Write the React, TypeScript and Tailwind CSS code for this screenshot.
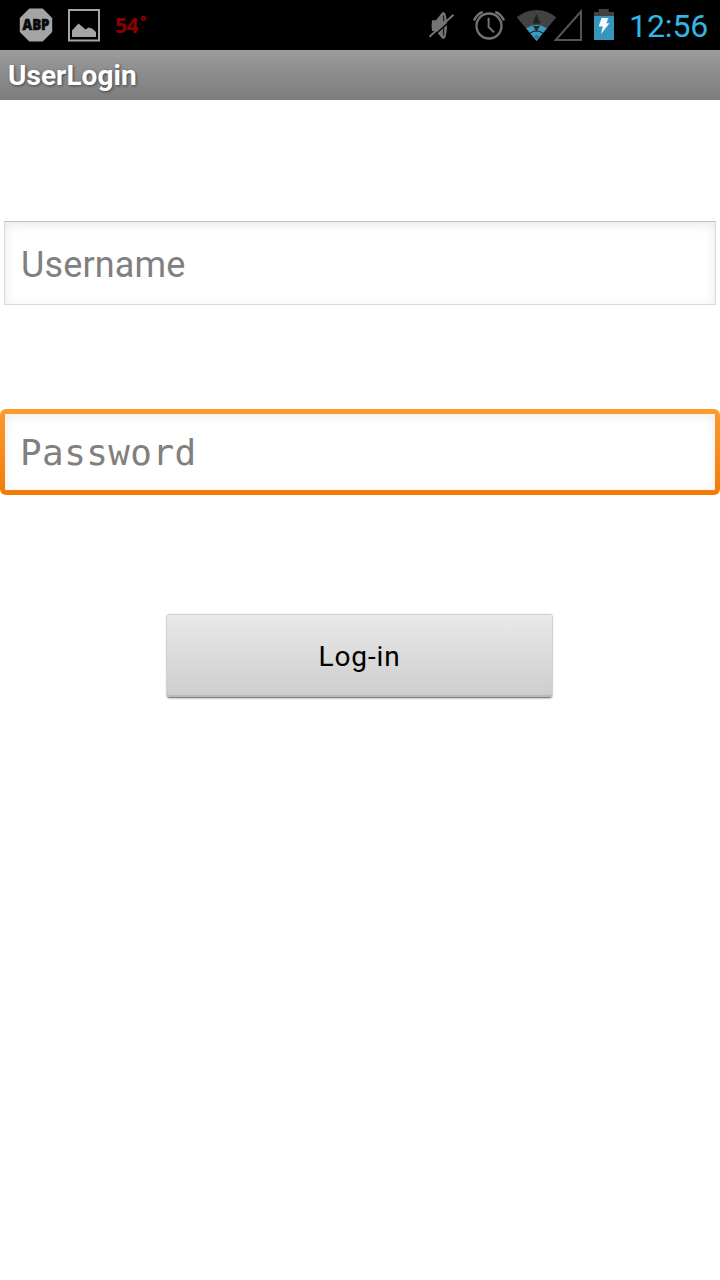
import React from "react";

function AdblockIcon() {
  return (
    <svg className="ml-[19px] block" width="34" height="34" viewBox="0 0 34 34">
      <path d="M10.3 0.4H23.7L33.2 9.9V24.1L23.7 33.6H10.3L0.8 24.1V9.9Z" fill="#a5a5a5" />
      <text x="17" y="22.2" textAnchor="middle" textLength="27" lengthAdjust="spacingAndGlyphs" fontFamily="Open Sans, sans-serif" fontWeight="800" fontSize="15.5" fill="#0a0a0a" stroke="#0a0a0a" strokeWidth="0.6">ABP</text>
    </svg>
  );
}

function PictureIcon() {
  return (
    <svg className="ml-[15px] block" width="32" height="34" viewBox="0 0 32 34">
      <rect x="1" y="2" width="30" height="30.5" fill="none" stroke="#a5a5a5" strokeWidth="2" />
      <path d="M4 29V22.5L10.5 15.5L17.5 21.5L20.5 19.5L24 20.5L28 24V29Z" fill="#a5a5a5" />
    </svg>
  );
}

function MuteIcon() {
  return (
    <svg className="block" width="28" height="32" viewBox="428 9 28 32">
      <path d="M432 20.3H436L441.5 13.2Q443.8 10.5 445.5 14Q446.9 18 446.9 25.5Q446.9 33 445.5 37Q443.8 40.5 441.5 37.8L436 31H432Q431.2 25.5 432 20.3Z" fill="#737373" />
      <path d="M443.6 15.5V21M443.6 27.5V35.5" stroke="#1c1c1c" strokeWidth="1.3" fill="none" />
      <path d="M431.5 37.8L455 16.8" stroke="#000" strokeWidth="1.5" />
      <path d="M429.5 36.8L453.5 14.8" stroke="#737373" strokeWidth="2" />
    </svg>
  );
}

function AlarmIcon() {
  return (
    <svg className="ml-[16px] block" width="34" height="32" viewBox="472 9 34 32">
      <g fill="none" stroke="#737373">
        <circle cx="489" cy="26" r="12.5" strokeWidth="2.3" />
        <path d="M488.6 17.8V27L494 32.3" strokeWidth="2" />
        <path d="M474 20.5Q476.5 14.5 482.7 11.9M495.3 11.9Q501.5 14.5 504 20.5" strokeWidth="2.3" />
      </g>
    </svg>
  );
}

function SignalIcons() {
  return (
    <svg className="ml-[10px] block" width="67" height="34" viewBox="516 8 67 34">
      <path d="M516.7 17.2Q526 10 536.5 10T556.3 17.2L536.5 41Z" fill="#424242" />
      <path d="M526.1 28.2Q536.5 21.8 546.9 28.2L536.5 41Z" fill="#3b9bc3" />
      <path d="M529.8 33.3Q536.5 28.5 543.2 33.3" fill="none" stroke="#20262a" strokeWidth="1.1" />
      <path d="M536.5 14L540.5 23.5H532.5Z" fill="#202020" />
      <path d="M533 26H540L536.5 32Z" fill="#242c30" />
      <path d="M534 37L536.5 34.5L539 37L536.5 39Z" fill="#2c7494" />
      <path d="M581 11.5V40H555.7Z" fill="none" stroke="#555" strokeWidth="2" />
    </svg>
  );
}

function BatteryIcon() {
  return (
    <svg className="ml-[11px] block" width="20" height="32" viewBox="594 9 20 32">
      <path d="M598.7 9H608.7V12H614V16H594V12H598.7Z" fill="#424242" />
      <path d="M594 16H614V40H594Z" fill="#3896bd" />
      <path d="M601.5 18H608.5L606.3 23.2H609.5L601 34L602.8 26.4H598.7Z" fill="#f4fafc" />
    </svg>
  );
}

export default function App() {
  return (
    <main className="flex min-h-[1280px] w-full flex-col bg-white font-[Roboto,sans-serif]">
      <div className="flex h-[50px] items-center bg-black">
        <AdblockIcon />
        <PictureIcon />
        <div className="ml-[15px] flex items-start font-['Open_Sans',sans-serif] font-bold text-[#8e0000]">
          <span className="text-[21px] leading-[52px] tracking-[-0.6px]">54</span>
          <span className="ml-[2px] mt-[11px] text-[16px] leading-[22px]">°</span>
        </div>
        <div className="ml-auto flex items-center pr-[12px]">
          <MuteIcon />
          <AlarmIcon />
          <SignalIcons />
          <BatteryIcon />
          <span className="ml-[15px] w-[79px] whitespace-nowrap pt-[2px] text-[32px] leading-[50px] tracking-[-0.1px] text-[#33b5e5]">12:56</span>
        </div>
      </div>
      <header className="flex h-[50px] items-center bg-linear-to-b from-[#9b9b9b] to-[#7d7d7d] px-[8px]">
        <h1 className="pt-[2px] text-[28px] font-bold leading-[48px] tracking-[0.05px] text-white [text-shadow:1px_1px_3px_#444]">UserLogin</h1>
      </header>
      <form className="flex flex-col" onSubmit={(e) => e.preventDefault()}>
        <input
          type="text"
          aria-label="Username"
          placeholder="Username"
          className="mx-[4px] mt-[121px] h-[84px] border border-[#d9d9d9] border-t-[#c0c0c0] bg-white pl-[16px] pt-[4px] text-[36px] tracking-[0.15px] shadow-[inset_0_3px_12px_rgba(0,0,0,0.09)] outline-none placeholder:text-[#808080]"
        />
        <div className="mt-[104px] h-[86px] rounded-[6px] bg-linear-to-b from-[#fb9c2a] to-[#f37a05] p-[5px]">
          <input
            type="password"
            aria-label="Password"
            placeholder="Password"
            className="block h-full w-full bg-white pl-[15px] font-['DejaVu_Sans_Mono',monospace] text-[36px] tracking-[0.4px] shadow-[inset_0_3px_12px_rgba(0,0,0,0.07)] outline-none placeholder:text-[#808080]"
          />
        </div>
        <button
          type="submit"
          className="ml-[167px] mt-[119px] h-[83px] w-[385px] rounded-[2px] border-t border-[#cfcfcf] bg-linear-to-b from-[#e9e9e9] to-[#cdcdcd] pt-px text-[28px] tracking-[0.9px] text-black shadow-[0_1px_2px_rgba(0,0,0,0.65),inset_0_-2px_1px_rgba(0,0,0,0.1)]"
        >
          Log-in
        </button>
      </form>
    </main>
  );
}
